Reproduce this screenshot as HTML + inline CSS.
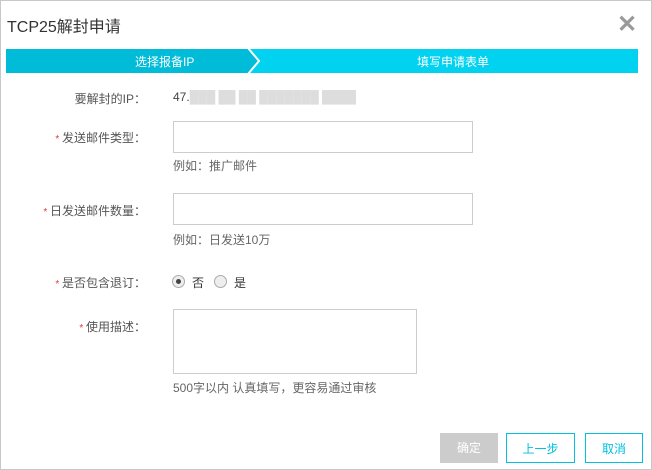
<!DOCTYPE html>
<html><head><meta charset="utf-8"><style>
body{margin:0;width:652px;height:470px;overflow:hidden;background:#fff;font-family:"Liberation Sans","Noto Sans CJK SC",sans-serif;}
.box{position:absolute;left:0;top:0;width:650px;height:468px;border:1px solid #c8c8c8;}
.t{position:absolute;font-size:12px;color:#333;white-space:nowrap;}
.lab{position:absolute;font-size:12px;color:#555;text-align:right;width:146px;left:0;white-space:nowrap;}
.lab b{color:#e4393c;font-weight:normal;font-size:10px;}
.in{position:absolute;border:1px solid #ccc;background:#fff;}
.hint{position:absolute;font-size:12px;color:#666;white-space:nowrap;}
.btn{position:absolute;top:433px;height:30px;line-height:30px;text-align:center;font-size:12px;box-sizing:border-box;}
.r{position:absolute;width:11px;height:11px;border-radius:50%;border:1px solid #aaa;background:#eee;top:275px;}
</style></head><body>
<div class="box"></div>
<div class="t" style="left:7px;top:13px;font-size:16px;color:#333;">TCP25解封申请</div>
<div class="t" style="left:617px;top:10px;font-size:24px;color:#999;font-weight:bold;">✕</div>
<svg style="position:absolute;left:6px;top:49px" width="632" height="24">
<rect x="0" y="0" width="632" height="24" fill="#00d2f0"/>
<polygon points="0,0 242,0 252,12 242,24 0,24" fill="#00bcd8"/>
<polyline points="242,-1 253,12 242,25" fill="none" stroke="#fff" stroke-width="2"/>
</svg>
<div class="t" style="left:135px;top:53px;color:#fff;">选择报备IP</div>
<div class="t" style="left:417px;top:53px;color:#fff;">填写申请表单</div>
<div class="lab" style="top:90px;">要解封的IP：</div>
<div class="t" style="left:173px;top:90px;color:#444;">47.<span style="color:#ddd;">███ ██ ██ ███████ ████</span></div>
<div class="lab" style="top:129px;"><b>* </b>发送邮件类型：</div>
<div class="in" style="left:173px;top:121px;width:298px;height:30px;"></div>
<div class="hint" style="left:173px;top:157px;">例如：推广邮件</div>
<div class="lab" style="top:202px;"><b>* </b>日发送邮件数量：</div>
<div class="in" style="left:173px;top:193px;width:298px;height:30px;"></div>
<div class="hint" style="left:173px;top:231px;">例如：日发送10万</div>
<div class="lab" style="top:274px;"><b>* </b>是否包含退订：</div>
<div class="r" style="left:172px;"><div style="width:5px;height:5px;border-radius:50%;background:#444;margin:3px;"></div></div>
<div class="t" style="left:192px;top:274px;">否</div>
<div class="r" style="left:214px;"></div>
<div class="t" style="left:234px;top:274px;">是</div>
<div class="lab" style="top:318px;"><b>* </b>使用描述：</div>
<div class="in" style="left:173px;top:309px;width:242px;height:63px;"></div>
<div class="hint" style="left:173px;top:379px;">500字以内 认真填写，更容易通过审核</div>
<div class="btn" style="left:440px;width:58px;background:#ccc;color:#fff;">确定</div>
<div class="btn" style="left:506px;width:69px;border:1px solid #00c1de;color:#00c1de;">上一步</div>
<div class="btn" style="left:585px;width:58px;border:1px solid #00c1de;color:#00c1de;">取消</div>
</body></html>
